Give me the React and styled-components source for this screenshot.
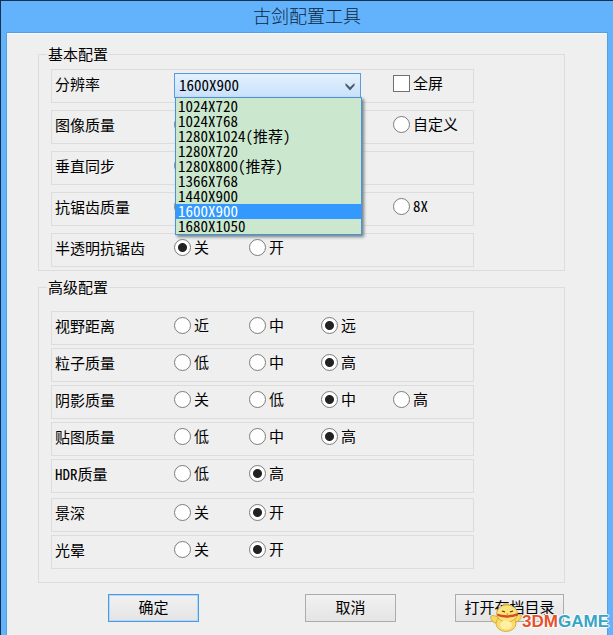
import React, { useState } from "react";
import styled, { createGlobalStyle, css } from "styled-components";

const GlobalStyle = createGlobalStyle`
  *, *::before, *::after { box-sizing: border-box; }
  body {
    margin: 0;
    background: #14304c;
    color: #000;
    font: 15px/16px "Noto Sans CJK SC", "Liberation Sans", sans-serif;
    font-feature-settings: "hwid";
  }
  button, select { font: inherit; font-feature-settings: inherit; color: inherit; }
`;

const Window = styled.div`
  position: relative;
  display: flex;
  flex-direction: column;
  min-height: 100vh;
  padding: 0 6px;
  background: #62b2fc;
  border: solid #14304c;
  border-width: 1px 0 0 1px;
  overflow: hidden;
`;

const TitleBar = styled.h1`
  margin: 0;
  height: 32px;
  font-size: 18px;
  font-weight: 300;
  line-height: 28px;
  text-align: center;
  color: #10263c;
`;

const Client = styled.form`
  flex: 1;
  padding: 12px 42px 13px 31px;
  background: #efefef;
  border-top: 1px solid #f8f8f8;
  box-shadow: 0 0 0 1px #559fe2;
`;

const Group = styled.fieldset`
  min-width: 0;
  margin: 0 0 8px;
  padding: ${(p) => (p.$roomy ? "16px 90px 13px 12px" : "7px 90px 3px 12px")};
  border: 1px solid #dcdcdc;
`;

const Legend = styled.legend`
  height: 16px;
  margin-left: -4px;
  padding: 0 1px;
`;

const Rows = styled.div`
  display: grid;
  gap: ${(p) => (p.$roomy ? "3px" : "7px")};
`;

const Row = styled.div`
  position: relative;
  display: grid;
  grid-template-columns: 119px 75px 72px 72px 1fr;
  align-items: center;
  height: 34px;
  padding: 0 0 4px 3px;
  border: 1px solid #dcdcdc;
  ${(p) => p.$apart && css`margin-top: 2px;`}
`;

const RowLabel = styled.span`
  white-space: nowrap;
`;

const Option = styled.label`
  display: flex;
  align-items: center;
  gap: 3px;
  padding-bottom: 2px;
  white-space: nowrap;
  grid-column: ${(p) => p.$column};
`;

const mark = css`
  appearance: none;
  flex: none;
  width: 17px;
  height: 17px;
  margin: 0;
  background: #fff;
`;

const Radio = styled.input.attrs({ type: "radio" })`
  ${mark}
  border: 1px solid #7c7c7c;
  border-radius: 50%;
  &:checked {
    background: radial-gradient(circle, #222 0 4px, #fff 5px);
  }
`;

const CheckBox = styled.input.attrs({ type: "checkbox" })`
  ${mark}
  border: 1px solid #707070;
  &:checked { background: #333; box-shadow: inset 0 0 0 3px #fff; }
`;

const Combo = styled.div`
  position: relative;
  grid-column: 2 / 5;
  width: 187px;
  height: 25px;
  margin-top: 3px;
`;

const Select = styled.select`
  appearance: none;
  width: 100%;
  height: 25px;
  padding: 0 24px 2px 4px;
  border: 1px solid #5a9bdc;
  border-radius: 0;
  background: linear-gradient(#e4f1fd, #c8e1fc);
  outline: none;
`;

const Arrow = styled.svg`
  position: absolute;
  right: 5px;
  top: 9px;
  pointer-events: none;
`;

const List = styled.ul`
  position: absolute;
  z-index: 2;
  top: 24px;
  left: 1px;
  width: 100%;
  margin: 0;
  padding: 1px 0 0;
  list-style: none;
  background: #cbe8cf;
  border: 1px solid #4b93d2;
  box-shadow: 2px 2px 3px #6f8088;
`;

const Item = styled.li`
  height: 15px;
  padding-left: 2px;
  line-height: 13px;
  cursor: default;
  color: ${(p) => (p.$selected ? "#fff" : "#000")};
  background: ${(p) => (p.$selected ? "#3399ff" : "transparent")};
`;

const Actions = styled.div`
  display: grid;
  grid-template-columns: 197px 150px auto;
  justify-content: start;
  justify-items: start;
  margin-top: 11px;
  padding-left: 70px;
`;

const Button = styled.button`
  height: 28px;
  min-width: ${(p) => (p.$wide ? "109px" : "91px")};
  padding: 0 8px 2px;
  border: 1px solid ${(p) => (p.$primary ? "#4c9ce4" : "#acacac")};
  background: linear-gradient(#f1f1f1, #e4e4e4);
  white-space: nowrap;
  ${(p) => p.$primary && css`box-shadow: inset 0 0 0 1px #b5d7f5;`}
`;

const Watermark = styled.div`
  position: absolute;
  right: 4px;
  bottom: 3px;
  z-index: 3;
  display: flex;
  align-items: flex-end;
  pointer-events: none;
  font: bold 17px/20px "Liberation Sans", sans-serif;
  font-feature-settings: normal;
  text-shadow: 1px 0 #fff, -1px 0 #fff, 0 1px #fff, 0 -1px #fff;
`;

const Brand = styled.span`
  color: ${(p) => (p.$cool ? "#35a5c6" : "#e4532c")};
`;

const RESOLUTIONS = [
  "1024X720", "1024X768", "1280X1024(推荐)", "1280X720", "1280X800(推荐)",
  "1366X768", "1440X900", "1600X900", "1680X1050",
];

const ADVANCED = [
  { name: "视野距离", options: ["近", "中", "远"], value: "远" },
  { name: "粒子质量", options: ["低", "中", "高"], value: "高" },
  { name: "阴影质量", options: ["关", "低", "中", "高"], value: "中" },
  { name: "贴图质量", options: ["低", "中", "高"], value: "高" },
  { name: "HDR质量", options: ["低", "高"], value: "高" },
  { name: "景深", options: ["关", "开"], value: "开", apart: true },
  { name: "光晕", options: ["关", "开"], value: "开" },
];

function RadioRow({ name, options, value, apart }) {
  return (
    <Row role="radiogroup" aria-label={name} $apart={apart}>
      <RowLabel>{name}</RowLabel>
      {options.map((text, i) =>
        text === null ? null : (
          <Option key={i} $column={i + 2}>
            <Radio name={name} defaultChecked={value !== undefined && text === value} />
            {text}
          </Option>
        )
      )}
    </Row>
  );
}

function ResolutionPicker() {
  const [value, setValue] = useState("1600X900");
  return (
    <Combo>
      <Select id="resolution" value={value} onChange={(e) => setValue(e.target.value)}>
        {RESOLUTIONS.map((r) => <option key={r}>{r}</option>)}
      </Select>
      <Arrow width="12" height="9" viewBox="0 0 12 9" aria-hidden="true">
        <path d="M1.5 1 L6 5.2 L10.5 1 V3.6 L6 8.4 L1.5 3.6 Z" fill="#4c5a68" />
      </Arrow>
      <List role="listbox" aria-labelledby="resolution-label">
        {RESOLUTIONS.map((r) => (
          <Item key={r} role="option" aria-selected={r === value} $selected={r === value} onClick={() => setValue(r)}>
            {r}
          </Item>
        ))}
      </List>
    </Combo>
  );
}

function Mascot() {
  return (
    <svg width="32" height="29" viewBox="0 0 32 29" aria-hidden="true">
      <path d="M13 4 Q12 0 16 1 Q20 0 19 4" fill="#f6d65b" stroke="#b98a25" strokeWidth=".7" />
      <path d="M8 14 Q1 11 .6 14 Q1 20 9 21 Z" fill="#f8d95c" stroke="#c79a32" strokeWidth=".7" />
      <path d="M24 13 Q31 10 31.4 13 Q31 18 24 20 Z" fill="#f8d95c" stroke="#c79a32" strokeWidth=".7" />
      <ellipse cx="16" cy="20.5" rx="10" ry="8" fill="#f9dd68" stroke="#c79a32" strokeWidth=".7" />
      <ellipse cx="17" cy="10.5" rx="10.5" ry="8.5" fill="#fbe47a" stroke="#c79a32" strokeWidth=".7" />
      <path d="M7 10.5 Q17 14 28 10 L28 12.5 Q17 16.5 7.5 13 Z" fill="#d94b25" />
      <path d="M12 8 l3 1 M20 9 l3 -1" stroke="#4a3418" strokeWidth="1.3" />
      <path d="M16 10.5 l2.5 0 l-1.3 2 z" fill="#ee8c22" />
      <ellipse cx="16" cy="22" rx="6" ry="4.5" fill="#fff0a4" />
    </svg>
  );
}

export default function App() {
  return (
    <>
      <GlobalStyle />
      <Window>
        <TitleBar>古剑配置工具</TitleBar>
        <Client onSubmit={(e) => e.preventDefault()}>
          <Group>
            <Legend>基本配置</Legend>
            <Rows>
              <Row>
                <RowLabel as="label" id="resolution-label" htmlFor="resolution">分辨率</RowLabel>
                <ResolutionPicker />
                <Option $column={5}><CheckBox />全屏</Option>
              </Row>
              <RadioRow name="图像质量" options={["", null, null, "自定义"]} />
              <RadioRow name="垂直同步" options={[""]} />
              <RadioRow name="抗锯齿质量" options={["", null, null, "8X"]} />
              <RadioRow name="半透明抗锯齿" options={["关", "开"]} value="关" />
            </Rows>
          </Group>
          <Group $roomy>
            <Legend>高级配置</Legend>
            <Rows $roomy>
              {ADVANCED.map((row) => <RadioRow key={row.name} {...row} />)}
            </Rows>
          </Group>
          <Actions>
            <Button type="submit" $primary>确定</Button>
            <Button type="button">取消</Button>
            <Button type="button" $wide>打开存档目录</Button>
          </Actions>
        </Client>
        <Watermark>
          <Mascot />
          <Brand>3DM</Brand>
          <Brand $cool>GAME</Brand>
        </Watermark>
      </Window>
    </>
  );
}
